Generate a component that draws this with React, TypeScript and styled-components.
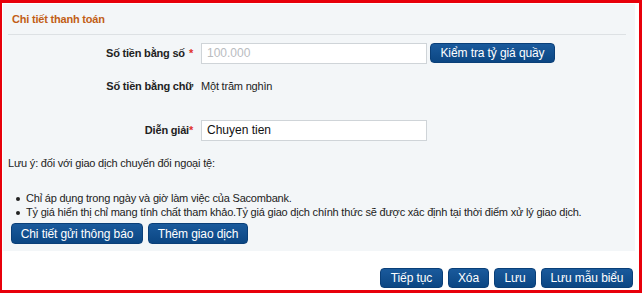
import React from "react";
import styled, { createGlobalStyle } from "styled-components";

const Global = createGlobalStyle`
  html, body { margin: 0; padding: 0; background: #fff; }
  body { font-family: "Liberation Sans", Arial, sans-serif; font-size: 11px; color: #222; }
  * { box-sizing: border-box; }
`;

const Frame = styled.div`
  width: 642px;
  height: 293px;
  border-style: solid;
  border-color: #e8000b;
  border-width: 3px 3px 3px 2px;
  background: #fff;
  display: flex;
  flex-direction: column;
`;

const Panel = styled.div`
  margin: 1px 4px 0 1px;
  height: 247px;
  background: #f3f6f8;
  display: flex;
  flex-direction: column;
`;

const Header = styled.div`
  height: 31px;
  padding: 9px 0 0 4px;
  color: #c25e16;
  font-weight: bold;
  font-size: 11px;
  letter-spacing: -0.2px;
  border-bottom: 1px solid #dde1e4;
  margin: 0 9px 0 5px;
`;

const FormGrid = styled.div`
  display: grid;
  grid-template-columns: 190px auto;
  column-gap: 8px;
  align-items: center;
  margin-top: 6px;
`;

const Label = styled.div<{ $h: number; $top?: number }>`
  height: ${(p) => p.$h}px;
  margin-top: ${(p) => p.$top ?? 0}px;
  display: flex;
  align-items: center;
  justify-content: flex-end;
  font-weight: bold;
  font-size: 11px;
  letter-spacing: -0.2px;
  color: #222;
`;

const Star = styled.span<{ $gap?: boolean }>`
  color: #e0302a;
  margin-left: ${(p) => (p.$gap ? "4px" : "0")};
`;

const Field = styled.div<{ $h: number; $top?: number }>`
  height: ${(p) => p.$h}px;
  margin-top: ${(p) => p.$top ?? 0}px;
  display: flex;
  align-items: center;
  gap: 3px;
`;

const Input = styled.div<{ $muted?: boolean }>`
  width: 226px;
  height: 21px;
  border: 1px solid #cfd4d8;
  background: #fff;
  padding: 0 5px;
  display: flex;
  align-items: center;
  font-size: 12px;
  color: ${(p) => (p.$muted ? "#b9bcbf" : "#111")};
`;

const Btn = styled.div<{ $w: number; $h?: number }>`
  width: ${(p) => p.$w}px;
  height: ${(p) => p.$h ?? 20}px;
  border-radius: 4px;
  background: linear-gradient(#1a5a9c, #0b4683);
  border: 1px solid #0a3f78;
  color: #fff;
  font-size: 12px;
  letter-spacing: -0.1px;
  display: inline-flex;
  align-items: center;
  justify-content: center;
  white-space: nowrap;
`;

const Value = styled.span`
  font-size: 11px;
  letter-spacing: -0.2px;
  color: #222;
`;

const Note = styled.div`
  margin: 15px 0 0 5px;
  font-size: 11px;
  letter-spacing: -0.2px;
  color: #222;
`;

const List = styled.ul`
  margin: 22px 0 0 0;
  padding: 0 0 0 13px;
  list-style: none;
  font-size: 11px;
  letter-spacing: -0.2px;
  line-height: 14px;
  color: #222;
`;

const Item = styled.li`
  display: flex;
  align-items: flex-start;
  &::before {
    content: "";
    flex: none;
    width: 4px;
    height: 4px;
    border-radius: 50%;
    background: #222;
    margin: 6px 6px 0 0;
  }
`;

const BtnRow = styled.div<{ $end?: boolean }>`
  display: flex;
  gap: 5px;
  justify-content: ${(p) => (p.$end ? "flex-end" : "flex-start")};
`;

const PanelBtns = styled(BtnRow)`
  margin: 4px 0 0 8px;
`;

const Footer = styled(BtnRow)`
  margin: 17px 6px 0 0;
`;

export default function App() {
  return (
    <>
      <Global />
      <Frame>
        <Panel>
          <Header>Chi tiết thanh toán</Header>
          <FormGrid>
            <Label $h={24}>
              Số tiền bằng số<Star $gap>*</Star>
            </Label>
            <Field $h={24}>
              <Input $muted>100.000</Input>
              <Btn $w={125}>Kiểm tra tỷ giá quầy</Btn>
            </Field>
            <Label $h={28} $top={7}>Số tiền bằng chữ</Label>
            <Field $h={28} $top={7}>
              <Value>Một trăm nghìn</Value>
            </Field>
            <Label $h={24} $top={18}>
              Diễn giải<Star>*</Star>
            </Label>
            <Field $h={24} $top={18}>
              <Input>Chuyen tien</Input>
            </Field>
          </FormGrid>
          <Note>Lưu ý: đối với giao dịch chuyển đổi ngoại tệ:</Note>
          <List>
            <Item>Chỉ áp dụng trong ngày và giờ làm việc của Sacombank.</Item>
            <Item>
              Tỷ giá hiển thị chỉ mang tính chất tham khảo.Tỷ giá giao dịch chính thức sẽ được xác định tại thời điểm xử lý giao dịch.
            </Item>
          </List>
          <PanelBtns>
            <Btn $w={132} $h={21}>Chi tiết gửi thông báo</Btn>
            <Btn $w={100} $h={21}>Thêm giao dịch</Btn>
          </PanelBtns>
        </Panel>
        <Footer $end>
          <Btn $w={63}>Tiếp tục</Btn>
          <Btn $w={41}>Xóa</Btn>
          <Btn $w={42}>Lưu</Btn>
          <Btn $w={92}>Lưu mẫu biểu</Btn>
        </Footer>
      </Frame>
    </>
  );
}
